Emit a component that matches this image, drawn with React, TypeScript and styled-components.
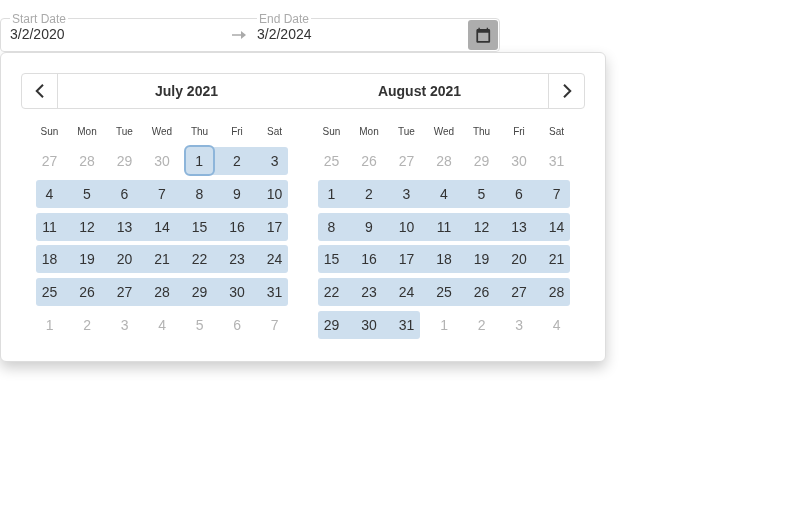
import React from "react";
import styled, { createGlobalStyle } from "styled-components";

const GlobalStyle = createGlobalStyle`
  body {
    margin: 0;
    background: #fff;
    font-family: "Liberation Sans", Arial, sans-serif;
    color: #333;
  }
`;

type Day = { n: number; muted?: boolean };

const range = (from: number, to: number): Day[] => {
  const out: Day[] = [];
  for (let i = from; i <= to; i++) out.push({ n: i });
  return out;
};
const muted = (from: number, to: number): Day[] =>
  range(from, to).map((d) => ({ ...d, muted: true }));

const MONTHS = [
  { title: "July 2021", days: [...muted(27, 30), ...range(1, 31), ...muted(1, 7)] },
  { title: "August 2021", days: [...muted(25, 31), ...range(1, 31), ...muted(1, 4)] },
];
const WEEKDAYS = ["Sun", "Mon", "Tue", "Wed", "Thu", "Fri", "Sat"];

const Page = styled.div`
  width: 800px;
  height: 510px;
  padding-top: 18px;
  box-sizing: border-box;
  overflow: hidden;
  will-change: transform;
`;

const Field = styled.div`
  position: relative;
  width: 500px;
  height: 34px;
  box-sizing: border-box;
  display: flex;
  align-items: center;
  padding-right: 1px;
  border: 1px solid #ddd;
  border-radius: 4px;
  background: #fff;
`;

const DateSection = styled.div<{ $width: number }>`
  position: relative;
  width: ${(p) => p.$width}px;
  height: 100%;
  box-sizing: border-box;
  padding: 6px 0 0 9px;
  font-size: 14px;
  line-height: 18px;
  color: #333;
`;

const FieldLabel = styled.span`
  position: absolute;
  top: -7px;
  left: 9px;
  padding: 0 2px;
  background: #fff;
  font-size: 12px;
  line-height: 14px;
  color: #aaa;
`;

const ArrowSlot = styled.div`
  width: 17px;
  height: 100%;
  display: flex;
  align-items: center;
  padding: 0 0 1px 1px;
  box-sizing: border-box;
`;

const CalendarButton = styled.button`
  width: 30px;
  height: 30px;
  margin-left: auto;
  padding: 0;
  border: 0;
  border-radius: 3px;
  background: #adadad;
  display: flex;
  align-items: center;
  justify-content: center;
`;

const Popup = styled.div`
  width: 606px;
  height: 310px;
  box-sizing: border-box;
  padding: 20px;
  background: #fff;
  border: 1px solid #ddd;
  border-radius: 6px;
  box-shadow: 0 6px 14px rgba(0, 0, 0, 0.2);
`;

const MonthBar = styled.div`
  height: 36px;
  box-sizing: border-box;
  display: flex;
  border: 1px solid #ddd;
  border-radius: 4px;
`;

const NavButton = styled.div<{ $side: "left" | "right" }>`
  width: 35px;
  flex: none;
  display: flex;
  align-items: center;
  justify-content: center;
  border-${(p) => (p.$side === "left" ? "right" : "left")}: 1px solid #ddd;
`;

const Titles = styled.div`
  flex: 1;
  display: grid;
  grid-template-columns: 1fr 1fr;
  padding: 0 12px;
`;

const MonthTitle = styled.div`
  text-align: center;
  font-size: 14px;
  font-weight: 700;
  line-height: 34px;
  color: #333;
`;

const Months = styled.div`
  display: grid;
  grid-template-columns: 282px 282px;
`;

const MonthPanel = styled.div`
  padding: 0 9.75px;
`;

const WeekdayRow = styled.div`
  display: grid;
  grid-template-columns: repeat(7, 37.5px);
  height: 36px;
  box-sizing: border-box;
  padding-top: 10px;
  align-items: center;
`;

const Weekday = styled.div`
  text-align: center;
  font-size: 10px;
  line-height: 12px;
  color: #444;
`;

const DayGrid = styled.div`
  display: grid;
  grid-template-columns: repeat(7, 37.5px);
  grid-auto-rows: 32.67px;
`;

const DayCell = styled.div`
  display: flex;
  align-items: center;
  position: relative;
`;

const DayBand = styled.div<{ $inRange: boolean; $first: boolean; $last: boolean; $muted: boolean }>`
  flex: 1;
  height: 28px;
  margin-left: ${(p) => (p.$first ? 5.25 : 0)}px;
  margin-right: ${(p) => (p.$last ? 5 : 0)}px;
  padding-left: ${(p) => (p.$first ? 0 : 5.25)}px;
  padding-right: ${(p) => (p.$last ? 0 : 5.25)}px;
  display: flex;
  align-items: center;
  justify-content: center;
  font-size: 14px;
  color: ${(p) => (p.$muted ? "#b3b3b3" : "#333")};
  background: ${(p) => (p.$inRange ? "#cedfee" : "transparent")};
  border-radius: ${(p) => (p.$first ? 3 : 0)}px ${(p) => (p.$last ? 3 : 0)}px
    ${(p) => (p.$last ? 3 : 0)}px ${(p) => (p.$first ? 3 : 0)}px;
`;

const SelectedRing = styled.div`
  position: absolute;
  left: 2.75px;
  top: 0.33px;
  width: 31.5px;
  height: 31px;
  box-sizing: border-box;
  border: 2px solid #8db5da;
  border-radius: 6px;
  background: #cedfee;
  display: flex;
  align-items: center;
  justify-content: center;
  font-size: 14px;
  color: #333;
`;

const Chevron = ({ dir }: { dir: "left" | "right" }) => (
  <svg width="12" height="16" viewBox="0 0 12 16" fill="none">
    <path
      d={dir === "left" ? "M9 1.75 2.75 8 9 14.25" : "M3 1.75 9.25 8 3 14.25"}
      stroke="#333"
      strokeWidth="2"
    />
  </svg>
);

const Arrow = () => (
  <svg width="14" height="8" viewBox="0 0 14 8">
    <path d="M0 3.2h9V0l5 4-5 4V4.8H0z" fill="#aaa" />
  </svg>
);

const CalendarIcon = () => (
  <svg width="16.5" height="16.5" viewBox="0 0 24 24" fill="#333">
    <path
      fillRule="evenodd"
      d="M20 3h-1V1h-2v2H7V1H5v2H4c-1.1 0-2 .9-2 2v16c0 1.1.9 2 2 2h16c1.1 0 2-.9 2-2V5c0-1.1-.9-2-2-2zm-.5 17.5h-15V8.5h15z"
    />
  </svg>
);

const Month = ({ days, selectFirst }: { days: Day[]; selectFirst: boolean }) => (
  <MonthPanel>
    <WeekdayRow>
      {WEEKDAYS.map((w) => (
        <Weekday key={w}>{w}</Weekday>
      ))}
    </WeekdayRow>
    <DayGrid>
      {days.map((d, i) => {
        const inRange = !d.muted;
        const col = i % 7;
        const prevIn = col > 0 && !days[i - 1].muted;
        const nextIn = col < 6 && i + 1 < days.length && !days[i + 1].muted;
        const selected = selectFirst && inRange && d.n === 1;
        return (
          <DayCell key={i}>
            <DayBand
              $inRange={inRange}
              $first={!prevIn}
              $last={!nextIn}
              $muted={!!d.muted}
            >
              {d.n}
            </DayBand>
            {selected && <SelectedRing>{d.n}</SelectedRing>}
          </DayCell>
        );
      })}
    </DayGrid>
  </MonthPanel>
);

export default function App() {
  return (
    <Page>
      <GlobalStyle />
      <Field>
        <DateSection $width={230}>
          <FieldLabel>Start Date</FieldLabel>
          3/2/2020
        </DateSection>
        <ArrowSlot>
          <Arrow />
        </ArrowSlot>
        <DateSection $width={220}>
          <FieldLabel>End Date</FieldLabel>
          3/2/2024
        </DateSection>
        <CalendarButton>
          <CalendarIcon />
        </CalendarButton>
      </Field>
      <Popup>
        <MonthBar>
          <NavButton $side="left">
            <Chevron dir="left" />
          </NavButton>
          <Titles>
            {MONTHS.map((m) => (
              <MonthTitle key={m.title}>{m.title}</MonthTitle>
            ))}
          </Titles>
          <NavButton $side="right">
            <Chevron dir="right" />
          </NavButton>
        </MonthBar>
        <Months>
          {MONTHS.map((m, i) => (
            <Month key={m.title} days={m.days} selectFirst={i === 0} />
          ))}
        </Months>
      </Popup>
    </Page>
  );
}
